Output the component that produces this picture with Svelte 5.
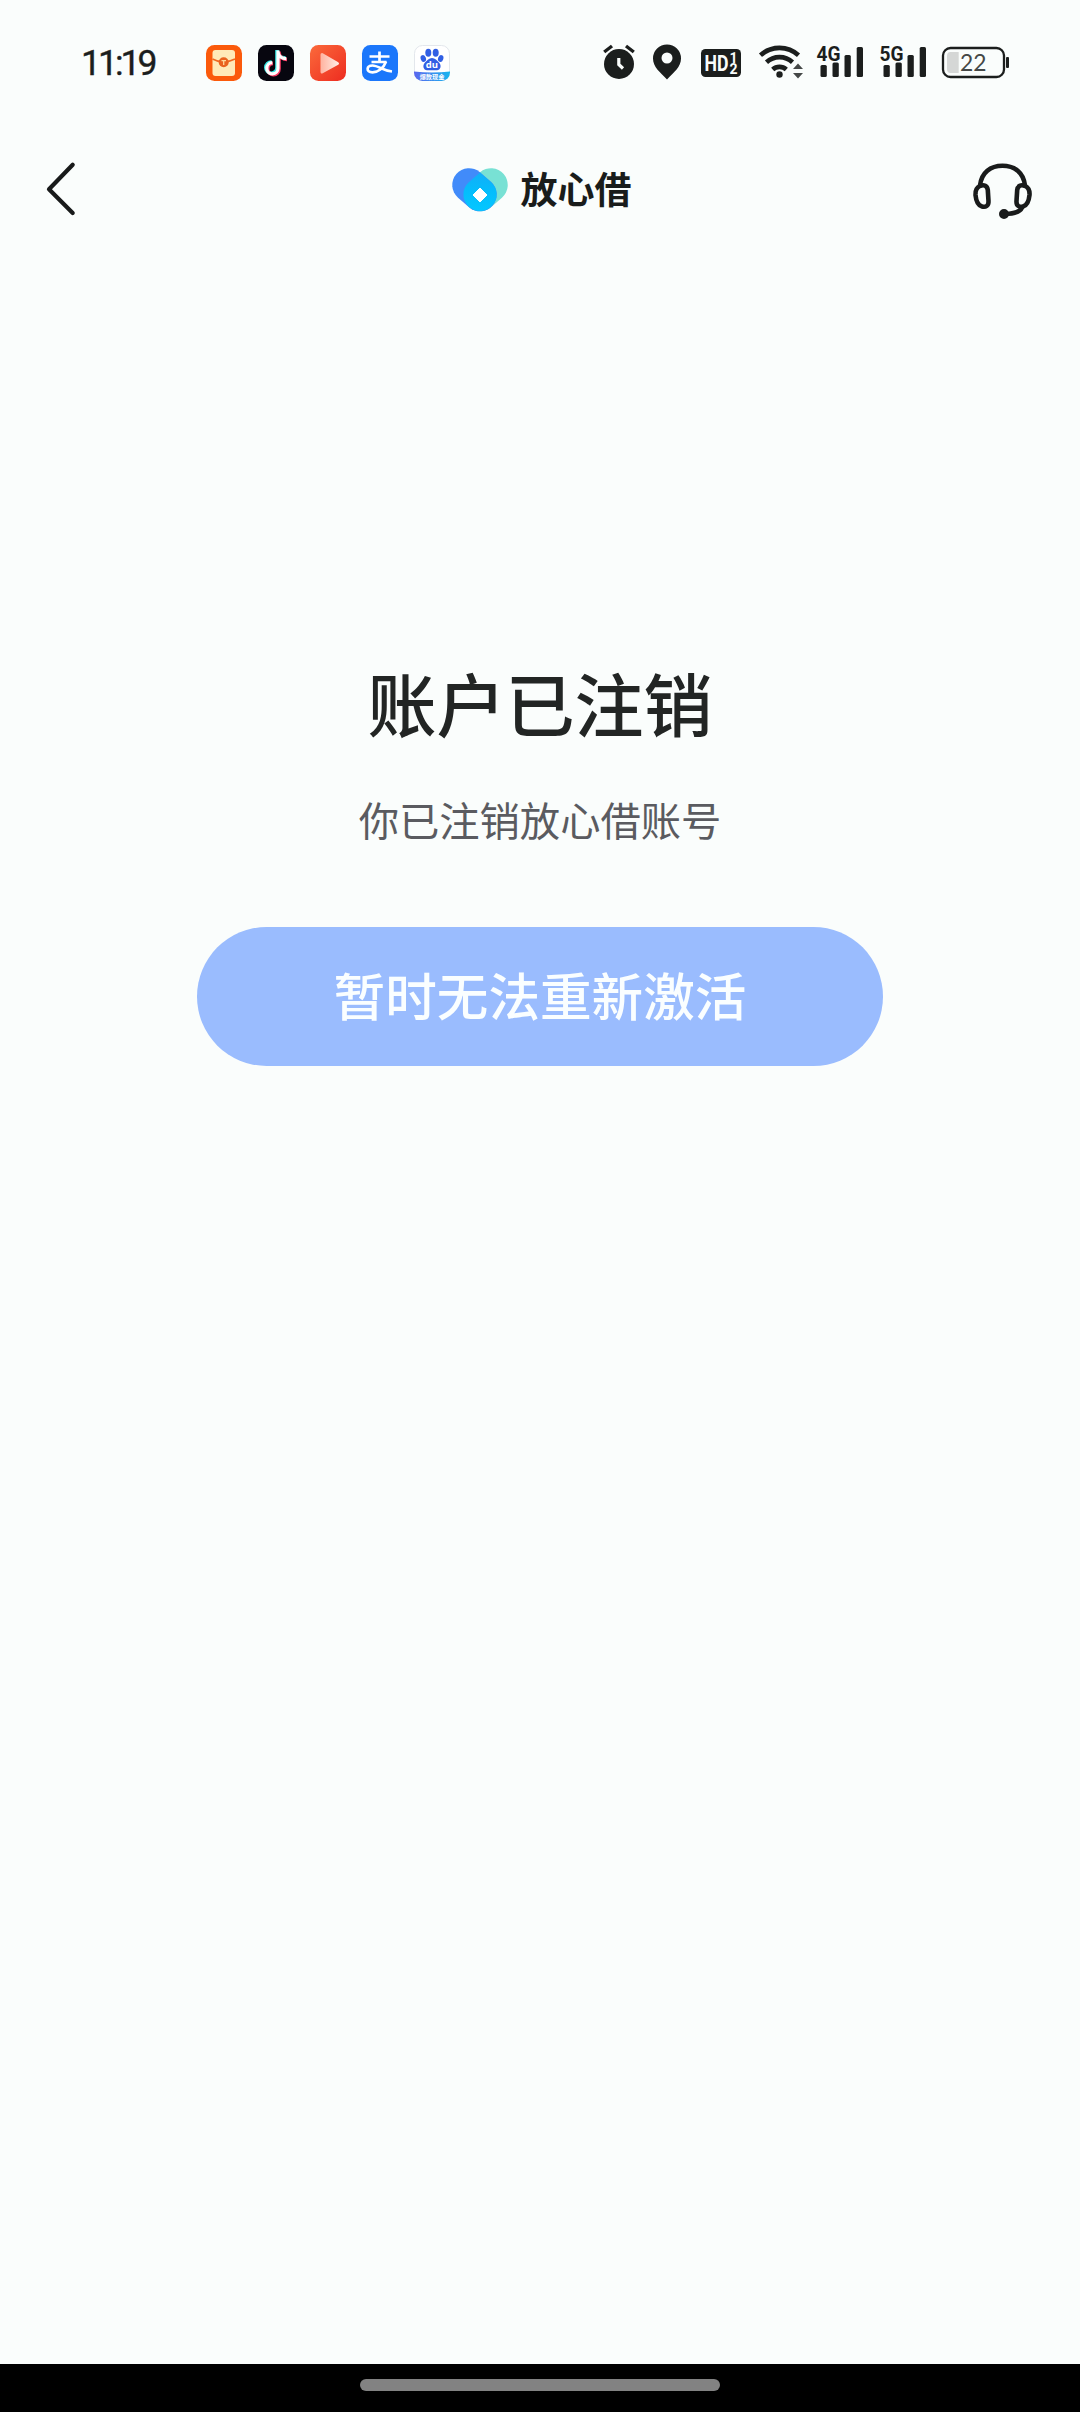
<script lang="ts">
  const title = '账户已注销';
  const subtitle = '你已注销放心借账号';
  const action = '暂时无法重新激活';
  const networks = ['4G', '5G'];
</script>

<div class="screen">
  <header class="status">
    <span class="time">11:19</span>
    <div class="apps">
      <svg width="36" height="36" viewBox="0 0 36 36">
        <rect width="36" height="36" rx="8.5" fill="#fb5a0b" />
        <rect x="6.5" y="5" width="22.5" height="26" rx="3" fill="#ffeab8" />
        <path d="M6.5 14Q12 17 17.500 17T29 14" fill="none" stroke="#ef6a22" stroke-width="1.500" />
        <circle cx="17.700" cy="17.300" r="5" fill="#e9631e" />
        <path d="M15.500 15.600H20M17.700 15.600V20" stroke="#ffd79a" stroke-width="1.300" />
      </svg>
      <svg width="36" height="36" viewBox="0 0 36 36">
        <rect width="36" height="36" rx="8.500" fill="#07060f" />
        <g fill="none" stroke-width="3.600">
          <path d="M19 5V22.500A5.600 5.600 0 1 1 13.500 17M19 6C19.500 10.500 23 13 27.500 13" stroke="#38e6e4" />
          <path d="M21 6.500V24A5.600 5.600 0 1 1 15 18.500M21 7.500C21.500 12 25 14.500 29 14.500" stroke="#f43a62" />
          <path d="M20 5.500V23.200A5.600 5.600 0 1 1 14.300 17.700M20 6.700C20.500 11.200 24 13.700 28.300 13.700" stroke="#fff" stroke-width="3.200" />
        </g>
      </svg>
      <svg width="36" height="36" viewBox="0 0 36 36">
        <defs>
          <linearGradient id="video" x1="0" y1="0" x2="1" y2="1">
            <stop offset="0" stop-color="#fb6a3b" /><stop offset="1" stop-color="#ed2c20" />
          </linearGradient>
          <linearGradient id="play" x1="0" y1="0" x2="1" y2="0">
            <stop offset="0" stop-color="#ffb7a5" /><stop offset="1" stop-color="#ffe9e1" />
          </linearGradient>
        </defs>
        <rect width="36" height="36" rx="8.500" fill="url(#video)" />
        <path d="M12 9.500L27.500 18.500L12 27Z" fill="url(#play)" stroke="url(#play)" stroke-width="3" stroke-linejoin="round" />
      </svg>
      <svg width="36" height="36" viewBox="0 0 36 36">
        <rect width="36" height="36" rx="8.500" fill="#1b77fb" />
        <g fill="none" stroke="#fff" stroke-width="2.700">
          <path d="M7.500 11.500H27.500M17.500 6.500V17M9.500 17H24.500" />
          <path d="M24 16.500C21.500 23.500 16 27.300 10.500 27.300C3.500 27.300 4.500 20.500 10.500 20.500C16 20.500 21 25.500 30 26.500" />
        </g>
      </svg>
      <svg width="36" height="36" viewBox="0 0 36 36">
        <defs>
          <linearGradient id="ribbon"><stop offset="0" stop-color="#5b66ee" /><stop offset="1" stop-color="#18b5ef" /></linearGradient>
          <clipPath id="tile"><rect width="36" height="36" rx="8.500" /></clipPath>
        </defs>
        <rect x=".5" y=".5" width="35" height="35" rx="8" fill="#fff" stroke="#e3e7ec" />
        <g clip-path="url(#tile)"><path d="M0 26.500Q18 28.500 36 26.500V36H0Z" fill="url(#ribbon)" /></g>
        <g fill="#315fe4">
          <ellipse cx="14.300" cy="7.700" rx="3" ry="4" />
          <ellipse cx="21.700" cy="7.700" rx="3" ry="4" />
          <ellipse cx="9.300" cy="13.500" rx="2.600" ry="3.500" transform="rotate(-20 9.300 13.500)" />
          <ellipse cx="26.700" cy="13.500" rx="2.600" ry="3.500" transform="rotate(20 26.700 13.500)" />
          <path d="M18 13C21 13 23 15.500 25 17.500C28 20.500 26.500 25.300 23 25.300H13C9.500 25.300 8 20.500 11 17.500C13 15.500 15 13 18 13Z" />
        </g>
        <text x="18" y="23.400" class="du">du</text>
        <text x="18" y="33.600" class="strip">爆款现金</text>
      </svg>
    </div>

    <div class="system">
      <svg class="alarm" width="32" height="36" viewBox="603 44 32 36">
        <circle cx="619" cy="64" r="15" />
        <path d="M604.200 52L612 46M633.800 52L626 46" stroke="#1b1e1d" stroke-width="3.400" />
        <path d="M618.800 58V64.500L623 68.500" fill="none" stroke="#fafdfc" stroke-width="3.200" />
      </svg>
      <svg class="pin" width="28" height="36" viewBox="653 44 28 36">
        <path d="M667 44.500A14 14 0 0 0 653 58.500C653 67 660 72 667 79.500C674 72 681 67 681 58.500A14 14 0 0 0 667 44.500Z" />
        <circle cx="667" cy="58" r="5.500" fill="#fafdfc" />
      </svg>
      <svg class="hd" width="40" height="36" viewBox="701 44 40 36">
        <rect x="701" y="49" width="40" height="28" rx="4.500" />
        <text x="704.500" y="71" class="hdtext" textLength="24" lengthAdjust="spacingAndGlyphs">HD</text>
        <text x="733.500" y="62.500" class="hdnum">1</text>
        <text x="733.500" y="74" class="hdnum">2</text>
      </svg>
      <svg class="wifi" width="45" height="36" viewBox="759 44 45 36">
        <g fill="none" stroke="#1b1e1d" stroke-width="4.600">
          <path d="M760.500 55.300A28 28 0 0 1 798.500 55.300" />
          <path d="M766.500 62.300A19 19 0 0 1 792.500 62.300" />
          <path d="M772.700 69.500A10 10 0 0 1 786.300 69.500" />
        </g>
        <circle cx="779.500" cy="74.500" r="3.200" />
        <path d="M793 69H803L798 63.500ZM793 73H803L798 78.500Z" fill="#454847" />
      </svg>
      {#each networks as name}
        <svg class="signal" width="47" height="36" viewBox="0 0 47 36">
          <text x="-.5" y="16.500" class="net" textLength="24" lengthAdjust="spacingAndGlyphs">{name}</text>
          <rect x="3.500" y="21" width="6.300" height="12" rx="1.500" />
          <rect x="15.500" y="18.500" width="6.300" height="14.500" rx="1.500" />
          <rect x="27.500" y="11" width="6.300" height="22" rx="1.500" />
          <rect x="39.700" y="3" width="6.300" height="30" rx="1.500" />
        </svg>
      {/each}
      <svg class="battery" width="68" height="36" viewBox="942 44 68 36">
        <rect x="943" y="48" width="61" height="29" rx="7.500" fill="none" stroke="#1b1e1d" stroke-width="2.300" />
        <path d="M958.700 52H950.500Q947 52 947 56V69Q947 73 950.500 73H958.700Z" fill="#d5d7d6" />
        <rect x="1006" y="57" width="3" height="11" rx="1" />
        <text x="960" y="71.300" class="level" textLength="26.500" lengthAdjust="spacingAndGlyphs">22</text>
      </svg>
    </div>
  </header>

  <nav>
    <svg width="34" height="60" viewBox="44 160 34 60" fill="none">
      <path d="M72.700 164.800L49 189.300L72.700 213" stroke="#181a1a" stroke-width="4.200" stroke-linecap="round" stroke-linejoin="round" />
    </svg>
    <div class="brand">
      <svg width="57" height="46" viewBox="452 167 57 46">
        <defs>
          <linearGradient id="drop" x1="0" y1="0" x2="0" y2="1"><stop offset="0" stop-color="#12aef8" /><stop offset=".5" stop-color="#04bdfc" /><stop offset="1" stop-color="#05c7ff" /></linearGradient>
        </defs>
        <path d="M491 185L480 194.500" stroke="#78e1d4" stroke-width="33.500" stroke-linecap="round" />
        <path d="M469 185L480 194.500" stroke="#418bfa" stroke-width="33.500" stroke-linecap="round" />
        <path d="M480 172.500L491.500 182.400A16.600 16.600 0 1 1 468.500 182.400Z" fill="url(#drop)" />
        <path d="M480 188L487 195L480 202L473 195Z" fill="#fff" stroke="#fff" stroke-linejoin="round" />
      </svg>
      <span class="wordmark">放心借</span>
    </div>
    <svg width="60" height="60" viewBox="973.500 160 60 60" fill="none" stroke="#191b1b" stroke-width="4.600" stroke-linecap="round" stroke-linejoin="round">
      <path d="M980.500 185.500C982 172.500 991 165.800 1003 165.800S1024 172.500 1025.500 185.500" />
      <path d="M980.500 186C984.500 184 987.800 186 988.300 190L989 201C989.300 206 986 207.500 982.500 206.500C978.500 205.500 976.500 200 976 195C975.700 190.500 977 187.500 980.500 186Z" />
      <path d="M1025.500 186C1021.500 184 1018.200 186 1017.700 190L1017 201C1016.700 206 1020 207.500 1023.500 206.500C1027.500 205.500 1029.500 200 1030 195C1030.300 190.500 1029 187.500 1025.500 186Z" />
      <path d="M1022.500 207.500C1020.500 212 1014.500 214 1005 214" />
      <circle cx="1004.500" cy="214" r="2.700" fill="#191b1b" />
    </svg>
  </nav>

  <main>
    <h1>{title}</h1>
    <p>{subtitle}</p>
    <button disabled>{action}</button>
  </main>

  <footer><div class="handle"></div></footer>
</div>

<style>
  :global(body) { background: #fafdfc; }
  .screen {
    box-sizing: border-box;
    width: 1080px;
    height: 2412px;
    display: flex;
    flex-direction: column;
    background: #fafdfc;
    color: #222524;
    font-family: "Noto Sans CJK SC", "Noto Sans", sans-serif;
    overflow: hidden;
  }
  svg { display: block; flex: none; overflow: visible; }
  .status {
    height: 125px;
    box-sizing: border-box;
    padding: 0 70px 0 81px;
    display: flex;
    align-items: center;
    flex: none;
  }
  .time {
    width: 125px;
    font: 400 35.500px/36px Roboto, sans-serif;
    letter-spacing: -3px;
    color: #1b1e1d;
    -webkit-text-stroke: .4px #1b1e1d;
  }
  .apps { display: flex; gap: 16px; }
  .system { display: flex; margin-left: auto; padding-bottom: 1px; fill: #1b1e1d; }
  .pin { margin-left: 18px; }
  .hd { margin-left: 20px; }
  .wifi { margin-left: 18px; }
  .signal { margin-left: 13px; }
  .signal + .signal { margin-left: 16px; }
  .battery { margin-left: 15px; }
  .du { font: 700 9.500px "Open Sans", sans-serif; fill: #fff; text-anchor: middle; }
  .strip { font: 700 6.200px "Noto Sans CJK SC", sans-serif; fill: #fff; text-anchor: middle; }
  .hdtext { font: 700 22px Roboto, sans-serif; fill: #fafdfc; }
  .hdnum { font: 700 14px Roboto, sans-serif; fill: #fafdfc; text-anchor: middle; }
  .net { font: 700 21px Roboto, sans-serif; }
  .level { font: 400 24px Lato, sans-serif; fill: #454847; }
  nav {
    height: 130px;
    box-sizing: border-box;
    padding: 0 47px 0 44px;
    display: grid;
    grid-template-columns: 1fr auto 1fr;
    align-items: center;
    flex: none;
  }
  nav > :last-child { justify-self: end; }
  .brand { display: flex; align-items: center; gap: 12px; padding-left: 6px; }
  .wordmark {
    font-size: 37px;
    line-height: 46px;
    padding-bottom: 4px;
    font-weight: 700;
    color: #191c1b;
  }
  main {
    flex: 1;
    display: flex;
    flex-direction: column;
    align-items: center;
    padding-top: 397px;
  }
  h1 {
    margin: 0;
    font-size: 69px;
    line-height: 100px;
    font-weight: 500;
  }
  p {
    margin: 37px 0 0;
    font-size: 40.300px;
    line-height: 60px;
    color: #5a5b60;
    font-weight: 400;
  }
  button {
    margin: 78px 0 0;
    padding: 0 0 6px;
    box-sizing: border-box;
    width: 686px;
    height: 139px;
    border: 0;
    border-radius: 70px;
    background: #9abcfe;
    color: #fafeff;
    font: 500 51.600px/133px "Noto Sans CJK SC", sans-serif;
  }
  footer {
    height: 48px;
    box-sizing: border-box;
    padding-top: 15px;
    display: flex;
    justify-content: center;
    background: #000;
    flex: none;
  }
  .handle { width: 360px; height: 12px; border-radius: 6px; background: #828282; }
</style>
